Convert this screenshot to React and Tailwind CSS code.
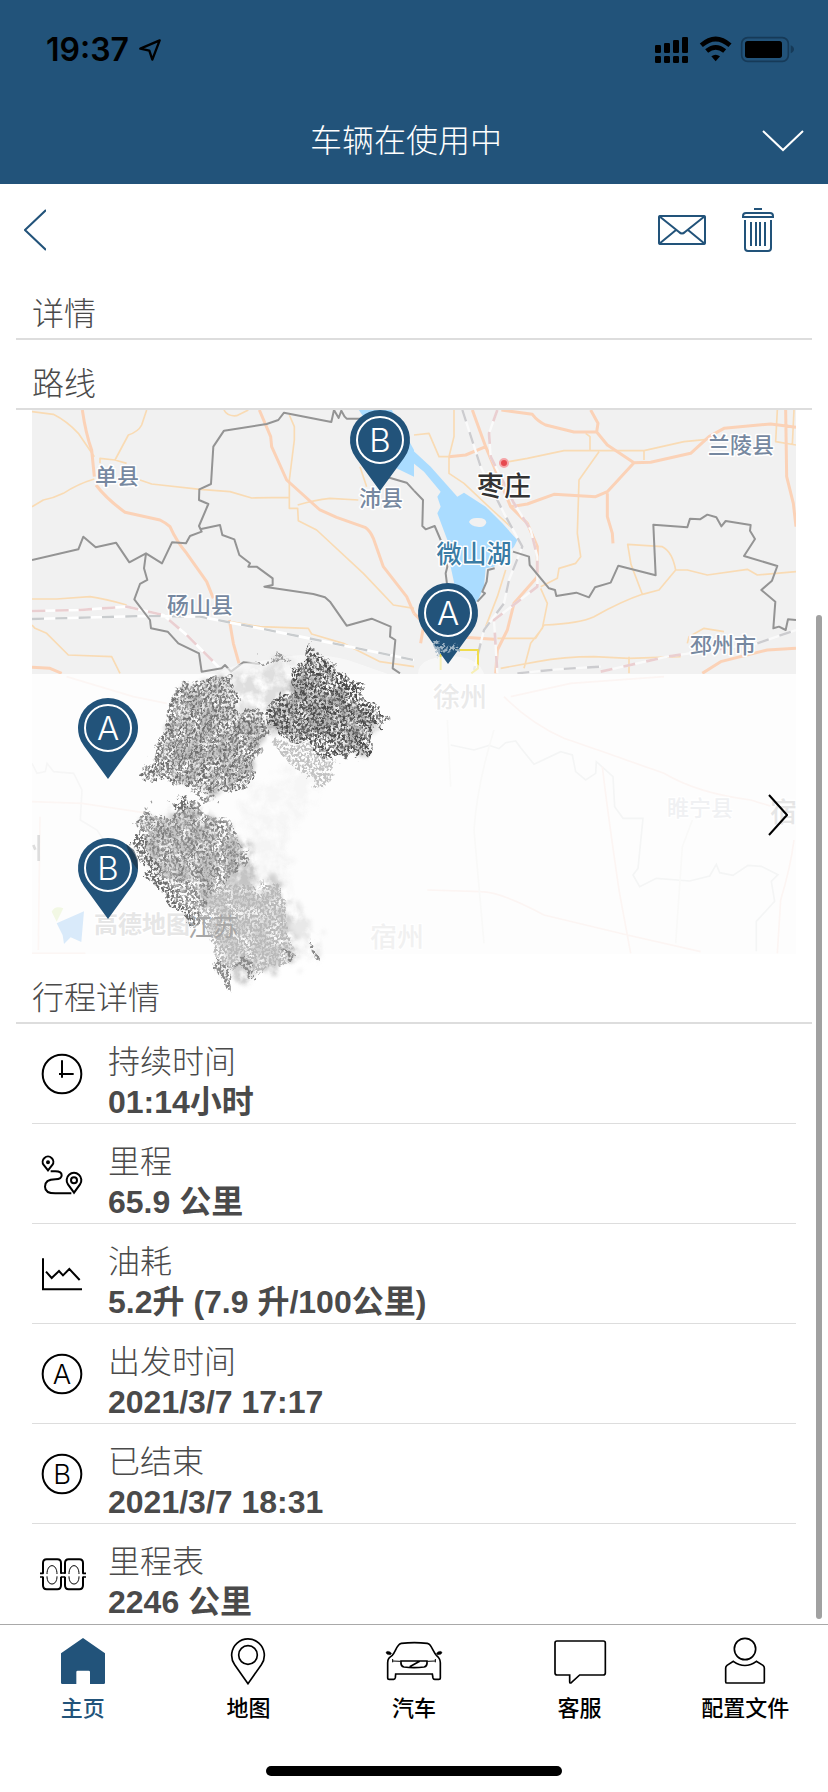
import React, { useState } from "react";

const TRIP_ROWS = [
  { icon: "clock", label: "持续时间", value: "01:14小时" },
  { icon: "route", label: "里程", value: "65.9 公里" },
  { icon: "fuel", label: "油耗", value: "5.2升 (7.9 升/100公里)" },
  { icon: "start", label: "出发时间", value: "2021/3/7 17:17" },
  { icon: "end", label: "已结束", value: "2021/3/7 18:31" },
  { icon: "odometer", label: "里程表", value: "2246 公里" },
];

const TABS = [
  { id: "home", label: "主页" },
  { id: "map", label: "地图" },
  { id: "car", label: "汽车" },
  { id: "support", label: "客服" },
  { id: "profile", label: "配置文件" },
];

const ROW_ICONS = {
  clock: (
    <svg viewBox="114 89 144 144" className="size-12" fill="none" stroke="#000" strokeWidth="6">
      <circle cx="186" cy="161" r="58" />
      <path d="M186 120v52M177 161h44" />
    </svg>
  ),
  route: (
    <svg viewBox="114 389 144 144" className="size-12" fill="none" stroke="#000" strokeWidth="6">
      <path d="M144 450l-13-16a16 16 0 1 1 26 0z" />
      <circle cx="144" cy="426" r="3" fill="#000" />
      <path d="M222 517l-18-25a22 22 0 1 1 36 0z" />
      <circle cx="222" cy="480" r="9" />
      <path d="M152 453h14c12 0 19 5 19 12 0 8-7 12-19 12-20 0-31 8-31 22s11 20 31 20h48" />
    </svg>
  ),
  fuel: (
    <svg viewBox="114 689 144 144" className="size-12" fill="none" stroke="#000" strokeWidth="6">
      <path d="M129 714v93h117" />
      <path d="M138 754l17 19 22-21 12 13 19-19 31 33" />
    </svg>
  ),
  start: <LetterIcon letter="A" />,
  end: <LetterIcon letter="B" />,
  odometer: (
    <svg viewBox="114 689 144 144" className="size-12" fill="none" stroke="#000" strokeWidth="6">
      <path d="M129 760v-32q0-11 11-11h32q11 0 11 11v32M129 769v26q0 12 11 12h32q11 0 11-12v-26" />
      <path d="M195 760v-32q0-11 11-11h32q11 0 11 11v32M195 769v26q0 12 11 12h32q11 0 11-12v-26" />
      <path d="M120 759h10M120 770h10M248 759h10M248 770h10M183 758h12M183 770h12" strokeWidth="5" />
      <path d="M141 761c0-14 6-25 15-25s15 11 15 25M141 768c0 14 6 23 15 23s15-9 15-23" strokeWidth="3" />
      <path d="M207 761c0-14 6-25 15-25s15 11 15 25M207 768c0 14 6 23 15 23s15-9 15-23" strokeWidth="3" />
    </svg>
  ),
};

const TAB_ICONS = {
  home: (
    <svg viewBox="159 81 180 144" className="h-12 w-15" fill="#22537a">
      <path d="M249 84l66 46v88q0 4-4 4h-41v-36q0-4-4-4h-33q-4 0-4 4v36h-42q-4 0-4-4v-88z" />
    </svg>
  ),
  map: (
    <svg viewBox="660 81 180 144" className="h-12 w-15" fill="none" stroke="#000" strokeWidth="5">
      <path d="M750 221l-40-57a49 49 0 1 1 80 0z" />
      <circle cx="750" cy="135" r="28" />
    </svg>
  ),
  car: (
    <svg viewBox="40 21 180 144" className="h-12 w-15" fill="none" stroke="#000" strokeWidth="5">
      <path d="M51 98v45q0 5 5 5h13q4 0 5-5l1-11h110l2 12q1 4 5 4h12q5 0 5-5V98c0-12-4-16-12-22-8-10-12-22-19-31q-3-4-8-5c-26-3-52-3-78 0q-5 1-8 5c-8 9-11 21-19 31-9 6-14 10-14 22z" />
      <path d="M63 70c-6-7-14-8-17-3 1 7 8 8 14 7zM197 70c6-7 14-8 17-3-1 7-8 8-14 7z" fill="#000" strokeWidth="1" />
      <path d="M66 87v10M66 93l24 1M194 87v10M194 93l-24 1" strokeWidth="3" />
      <path d="M91 93h78c1 10-2 17-9 18-18 2-42 2-60 0-7-1-10-8-9-18zM117 110l30-16" strokeWidth="5" />
    </svg>
  ),
  support: (
    <svg viewBox="423 81 180 144" className="h-12 w-15" fill="none" stroke="#000" strokeWidth="5">
      <path d="M444 93h139q6 0 6 6v90q0 6-6 6h-71l-25 23q-5 3-5-3v-20h-38q-6 0-6-6V99q0-6 6-6z" />
    </svg>
  ),
  profile: (
    <svg viewBox="921 81 180 144" className="h-12 w-15" fill="none" stroke="#000" strokeWidth="5">
      <circle cx="1011" cy="117" r="32" />
      <path d="M976 154q35 25 69 0l20 12q4 3 4 8v41q0 4-4 4H957q-4 0-4-4v-41q0-5 4-8z" />
    </svg>
  ),
};

function LetterIcon({ letter }) {
  return (
    <svg viewBox="0 0 144 144" className="size-12">
      <circle cx="72" cy="72" r="58" fill="none" stroke="#000" strokeWidth="6" />
      <text x="72" y="102" textAnchor="middle" fontSize="82" fontWeight="300" fontFamily="Inter, sans-serif">
        {letter}
      </text>
    </svg>
  );
}

function StatusBar() {
  return (
    <div className="flex h-[98px] items-center justify-between pt-[2px] pr-[33px] pl-[46px] text-black">
      <div className="flex items-center gap-[10px]">
        <span className="font-[Inter,sans-serif] text-[32px] leading-10 font-semibold">19:37</span>
        <svg viewBox="0 0 66 66" className="size-[22px]" fill="none" stroke="#000" strokeWidth="7" strokeLinejoin="round">
          <path d="M62 4L4 29l27 6 9 27z" />
        </svg>
      </div>
      <svg viewBox="45 48 420 84" className="h-7 w-[140px]">
        <rect x="45" y="75" width="18" height="24" rx="4" />
        <rect x="72" y="69" width="18" height="30" rx="4" />
        <rect x="99" y="60" width="18" height="39" rx="4" />
        <rect x="126" y="51" width="18" height="48" rx="4" />
        <rect x="45" y="108" width="18" height="21" rx="4" />
        <rect x="72" y="108" width="18" height="21" rx="4" />
        <rect x="99" y="108" width="18" height="21" rx="4" />
        <rect x="126" y="108" width="18" height="21" rx="4" />
        <path d="M184 76q43-38 86 0M200 93q27-22 54 0" fill="none" stroke="#000" strokeWidth="14" />
        <path d="M214 109q13-9 26 0l-13 15z" />
        <rect x="305" y="53" width="140" height="71" rx="18" fill="none" stroke="#163a58" strokeWidth="5" />
        <rect x="315" y="63" width="111" height="51" rx="8" />
        <path d="M452 76q10 4 10 12t-10 12z" fill="#163a58" />
      </svg>
    </div>
  );
}

function Pin({ x, y, letter }) {
  return (
    <g transform={`translate(${x} ${y})`}>
      <path d="M0 51L-24 18a30 30 0 1 1 48 0z" fill="#22537a" />
      <circle r="23" fill="none" stroke="#fff" strokeWidth="2" />
      <text y="12" textAnchor="middle" fontSize="33" fontWeight="300" fontFamily="Inter, sans-serif" fill="#fff">
        {letter}
      </text>
    </g>
  );
}

function PlaceName({ x, y, size = 22, color = "#7688a0", weight = 500, halo = "#fff", children }) {
  return (
    <text
      x={x}
      y={y}
      fontSize={size}
      fontWeight={weight}
      textAnchor="middle"
      fill={color}
      stroke={halo}
      strokeWidth="3"
      paintOrder="stroke"
      strokeLinejoin="round"
    >
      {children}
    </text>
  );
}

function RouteMap() {
  return (
    <svg
      viewBox="0 0 764 544"
      preserveAspectRatio="xMidYMid slice"
      className="block h-[544px] w-full overflow-visible"
      fontFamily="'Noto Sans CJK SC', sans-serif"
    >
      <defs>
        <clipPath id="mapTop">
          <rect width="764" height="264" />
        </clipPath>
        <clipPath id="mapAll">
          <rect width="764" height="544" />
        </clipPath>
        {/* stripe directions of the pencil strokes */}
        <pattern id="steep" width="37" height="60" patternUnits="userSpaceOnUse" patternTransform="rotate(22)">
          <rect width="37" height="60" fill="#8f8f8f" />
          <rect x="3" width="9" height="60" fill="#6c6c6c" />
          <rect x="20" width="6" height="60" fill="#777777" />
          <rect x="29" width="5" height="60" fill="#b5b5b5" />
        </pattern>
        <pattern id="dark" width="41" height="60" patternUnits="userSpaceOnUse" patternTransform="rotate(-43)">
          <rect width="41" height="60" fill="#6a6a6a" />
          <rect x="4" width="12" height="60" fill="#4a4a4a" />
          <rect x="22" width="5" height="60" fill="#a8a8a8" />
          <rect x="31" width="6" height="60" fill="#525252" />
        </pattern>
        <pattern id="mid" width="43" height="60" patternUnits="userSpaceOnUse" patternTransform="rotate(-40)">
          <rect width="43" height="60" fill="#9c9c9c" />
          <rect x="4" width="9" height="60" fill="#7e7e7e" />
          <rect x="20" width="7" height="60" fill="#bdbdbd" />
          <rect x="33" width="5" height="60" fill="#868686" />
        </pattern>
        <filter id="pencil" x="-10%" y="-10%" width="120%" height="120%" colorInterpolationFilters="sRGB">
          <feTurbulence type="fractalNoise" baseFrequency="0.02" numOctaves="4" seed="4" result="edge" />
          <feTurbulence type="fractalNoise" baseFrequency="0.14 0.12" numOctaves="3" seed="7" result="fine" />
          <feColorMatrix in="fine" values="0 0 0 0 0  0 0 0 0 0  0 0 0 0 0  0 0 0 6 -2.4" result="grain" />
          <feDisplacementMap in="SourceGraphic" in2="edge" scale="70" xChannelSelector="R" yChannelSelector="G" result="d" />
          <feComposite in="d" in2="grain" operator="in" />
        </filter>
        <filter id="smear" x="-10%" y="-10%" width="120%" height="120%" colorInterpolationFilters="sRGB">
          <feTurbulence type="fractalNoise" baseFrequency="0.025" numOctaves="5" seed="9" result="n" />
          <feColorMatrix in="n" values="0 0 0 0 0  0 0 0 0 0  0 0 0 0 0  0 0 0 3 -0.8" result="grain" />
          <feDisplacementMap in="SourceGraphic" in2="n" scale="90" xChannelSelector="R" yChannelSelector="G" result="d" />
          <feGaussianBlur in="d" stdDeviation="7" result="b" />
          <feComposite in="b" in2="grain" operator="in" />
        </filter>
      </defs>

      <g clipPath="url(#mapTop)">
        <rect width="764" height="264" fill="#f1f1f1" />

        {/* west half */}
        <g transform="translate(-32 -130) scale(0.33333)" fill="none" strokeLinejoin="round">
          <path d="M1070 380h100l72 130v80l-62-30-30-60z" fill="#aadcff" />
          <path
            stroke="#f9dbb4"
            strokeWidth="5"
            d="M96 395l64 8q40 20 75 57l48 70M440 390l-15 45q-10 20-40 30l-40 75M300 550v-15l45 5 35 10M283 597q-50 15-93 43-30 15-60 20l-34 20M420 600l35 12 145 16 90 7 65 19 113-2M868 405l15 35v40l-15 120v85h25l2 37 55 28 140 130 90 95 62 10M893 675q50-15 97-20l85 5M672 390q10 20 38 17l35-17M96 957h74l100-7q40 5 110 25M690 1025l90 15 145 5 10 17 95 28 110 55 102 15M96 1035l9 10 35 15q30 30 65 65l130 5 25 50M1080 560l20 60"
          />
          <path
            stroke="#fbd2b7"
            strokeWidth="9"
            d="M247 390q10 70 28 120l8 80M288 615q30 40 87 82l105 23q20 10 30 20 20 45 50 80l60 85 20 50M688 1020l12 70 17 60M778 390l34 80 3 30 45 100 100 90 50 22 85 30q15 10 25 33l30 85 70 90 22 50M96 1162l54 3 35 15"
          />
          <path stroke="#fff" strokeWidth="8" d="M96 993l144-3 140-10 110 25 70 60 100 100M96 1017l334-9 170 2 180 35 220 45 242 50" />
          <path stroke="#eacfd1" strokeWidth="8" strokeDasharray="40 30" d="M96 993l144-3 140-10 110 25 70 60 100 100" />
          <path stroke="#c9ccce" strokeWidth="7" strokeDasharray="36 34" d="M96 1017l334-9 170 2 180 35 220 45 242 50" />
          <path
            stroke="#949494"
            strokeWidth="6"
            d="M96 840l139-32 15-38 37 32 61-14 40 59 50-27 48 30 30-63 42 3 12-22 35-13-8-17 28-66-28-12 1-32 35-16 7-112 32-48 128-20 35-12 17-22 142 28 8-36 14 24 8-22 10 18 6 6h40M600 748l60-13 7 30 36 13 15 47 32 25-5 10h25l48 35v20l-25 5 147 22 35 10 15 13 50 72 75-21 57 24-2 30 16 10-8 85 22 15M438 820l-6 45 10 35-22 12-17 46 47 62 3 25 50 10 32 35 62 30 8 55 60-10 10-10 18 20 37-28 50 5M1140 585l80 23 22 24"
          />
        </g>

        {/* east half */}
        <g transform="translate(382 -130) scale(0.33333)" fill="none" strokeLinejoin="round">
          <path
            d="M-10 505l60 55 80 90 20-12 65 42 50 50 45 50-10 20-60 60-25 5-5 55-20 45h-40l-25-35-15-70-10-80-30-80 10-20-10-30 10-15-50-60-50-40z"
            fill="#aadcff"
          />
          <path d="M165 726q5-14 28-12 24 0 24 14-6 16-26 12-20-2-26-14z" fill="#f1f1f1" />
          <path
            stroke="#f9dbb4"
            strokeWidth="5"
            d="M120 390v80l-15 60v50l45 30 85 80 55 50M0 465l45-5 30 70h30M285 545l55-10 110-23h240l120-27 70-7M515 460l13 10v42M555 515l-60 85-5 160 10 70-15 20-50 15-5 30-50 25M690 510v30M641 793l104 7q30 15 40 70l-50 60-50 13-34-90zM685 943q-60 20-145 67-40 20-150 25M785 870h35l60 15 120-17 30 17 116-10M380 925l20 45-15 75-35 45-20 75M260 1165l110-20q80-15 170-15l105 5 155-5M645 1130v50M1090 390l-5 95 61 10M1140 390l-5 105M275 870l-25 80-35 90M820 1090l5-20 45-25 60 10M250 1075h115l25-40"
          />
          <path
            stroke="#fbd2b7"
            strokeWidth="9"
            d="M175 390l40 110 25 60 50 120 50 50 30 70v90l-70 80-20 80-30 60-5 70M105 530l50-5 60-25M262 390l93 13q15 20 40 32l85 21h68l4-26-22-40M548 456l32 39 80 53 50-1 120-27 55-50 45-25 140-13 76 10M660 548l-80 87-35 15-125-7-80 29-50 8M580 640v70l15 50 2 30M1115 390l3 200 20 80 8 70M865 1180l55-35 140-35 86-5M150 1072l90 6M0 1000l30 30-10 60"
          />
          <path stroke="#fafafa" strokeWidth="7" d="M145 390l55 170 70 140 55 100-40 100-15 70-60 80-30 120M250 390l-25 70 5 70 70 140 50 80 20 80v90l-130 100 10 160M310 1180l120-12 130-8M560 1175l200-45 270-40 116-40" />
          <path stroke="#cccccf" strokeWidth="7" strokeDasharray="36 34" d="M145 390l55 170 70 140 55 100-40 100-15 70-60 80-30 120M310 1180l120-12 130-8M1030 1090l116-40" />
          <path stroke="#eacfd1" strokeWidth="8" strokeDasharray="36 34" d="M250 390l-25 70 5 70 70 140 50 80 20 80v90l-130 100 10 160M560 1175l200-45 270-40" />
          <path stroke="#f0dc4e" strokeWidth="6" d="M80 1110h112v55l-20 15M80 1120v50" />
          <path
            stroke="#949494"
            strokeWidth="6"
            d="M0 632l27 28-2 78 10 10 27-10 18 42 20 80-5 20 5 40M297 815l48 15 2 25 58 70 18 5 4 18 60-10 38 14 18-30 47-14 23-51 112 29-7-152 102 8 8-26 30 2 22-14 27 8 15 27 13-16 75 12-2 17 15 25-33 51 100 30-16 44-32 28 42 35-6 80 17-5 20 10 7-32 24 2M242 865l-20 5-4 35-13 30 8 5-23 25"
          />
        </g>
        <circle cx="472" cy="53" r="4" fill="#e6494f" stroke="#f5a5a8" strokeWidth="2" />

        <PlaceName x="85" y="74">单县</PlaceName>
        <PlaceName x="168" y="203">砀山县</PlaceName>
        <PlaceName x="349" y="96">沛县</PlaceName>
        <PlaceName x="709" y="43">兰陵县</PlaceName>
        <PlaceName x="691" y="243">邳州市</PlaceName>
        <PlaceName x="442" y="153" size={25} color="#3a7ca5">微山湖</PlaceName>
        <PlaceName x="472" y="86" size={27} color="#333333">枣庄</PlaceName>
        <path d="M186 264q10-10 50-14 40-10 80 0l40 14zM386 264q0-16 30-18 30 0 36 18z" fill="#fbfbfb" opacity="0.6" />
      </g>

      <Pin x={348} y={30} letter="B" />
      <Pin x={416} y={203} letter="A" />
      <g transform="translate(382 -130) scale(0.33333)">
        <path d="M60 1090l20-5 22 15 26-10 5 20-25 20-30-5z" fill="#9db3c4" filter="url(#pencil)" />
      </g>

      {/* faded lower part of the map under the addresses */}
      <g clipPath="url(#mapAll)">
        <rect y="264" width="764" height="280" fill="#fdfdfd" />
        <g transform="translate(382 230) scale(0.33333)" fill="none" strokeWidth="5">
          <path stroke="#f4f5f5" d="M110 315l70 15 45-14 30 10 20-18 30-5 15 20 40 50 80-38 35 10 10 50 30 25 30-20 2-35 50 45 5 90 25 35h60l-15 150-15 20 20 35 50-25 100 8 60-15 20-35 10 25 40 8 45-30 40 3 50 25-20 20 10 60-55 60v90" />
          <path stroke="#fcf5f3" d="M270 170q80 80 180 125l130 45 170 60q100 60 260 80l130 40M290 170l180-40 280-20M565 380q15 130 50 370l35 190M1140 600q-10 80-40 180l-10 160M40 750l160 5q60 0 190 70l250 60 220 50" />
          <path stroke="#f9f9f8" d="M100 240l10 200M240 270q-50 160-60 300l30 340M835 540l-30 80-20 290" />
        </g>
        <g transform="translate(-32 230) scale(0.33333)" fill="none" strokeWidth="5">
          <path stroke="#f6f6f6" d="M96 370l15 30 25-5 5-25 20 25 60 5 25 50-5 90 50 30 20 30" />
          <path stroke="#fcf6f4" d="M96 485l150 5 200 30M120 530l-5 400M200 110l200 60 100 20M96 940h160" />
          <path d="M170 850l82-36-8 92-32-14-20 20-4-26z" fill="#d9eafa" />
          <path d="M155 815q10-20 35-10l-20 40z" fill="#f2f8e4" />
          <path d="M116 585v78M100 615l6 14" stroke="#dddddd" strokeWidth="8" />
        </g>
        <PlaceName x="428" y="297" size={27} color="#eaeaea">徐州</PlaceName>
        <PlaceName x="668" y="406" size={22} color="#f0f1f3">睢宁县</PlaceName>
        <PlaceName x="765" y="412" size={27} color="#e6e6e6">宿迁</PlaceName>
        <PlaceName x="365" y="537" size={27} color="#f1f1f1">宿州</PlaceName>
        <PlaceName x="110" y="523" size={24} color="#e6e6e6" weight={700}>高德地图</PlaceName>
      </g>

      <Pin x={76} y={318} letter="A" />

      {/* pencil shading */}
      <g transform="translate(-32 230) scale(0.33333)">
        <g filter="url(#smear)">
          <path d="M700 110l170-50 20 110-80 60-110-30z" fill="#dedede" />
          <path d="M720 440l200-60 50 60-80 120-160 20z" fill="#f6f6f6" />
          <path d="M760 560l90-20 20 230-120-50z" fill="#f4f4f4" />
          <path d="M550 150l130-40 10 90 100 50-30 150-110 60-110-40-70-20z" fill="#c4c4c4" />
          <path d="M890 110l50-50 190 190-50 90-280-80z" fill="#b5b5b5" />
          <path d="M440 540l140-40 160 110 60 130-150 80-200-160z" fill="#c4c4c4" />
          <path d="M620 740l210-30 60 150-10 110-190 60-60-170z" fill="#d0d0d0" />
          <path d="M890 790l50 50 30 110-40 10-50-80z" fill="#e8e8e8" />
        </g>
        <g filter="url(#pencil)">
          <path d="M540 130l155-20 10 90 95 35-30 155-30 60-90 20-90-40-50-10-85 5z" fill="url(#steep)" />
          <path d="M770 75l75-30 20 20-50 10z" fill="#9c9c9c" />
          <path d="M920 25l20-15 230 230-40 20-10 60-35 50-60-40-40 30-185-100 10-80 60-20 5-70 50-10z" fill="url(#dark)" />
          <path d="M820 290l200 75-55 85-150-130z" fill="#c2c2c2" />
          <path d="M570 430l75 55-15 10-60-45zM400 550l50-45 55 20 70-45 125 80 45 80-90 130-60 90-25 5-165-220z" fill="url(#mid)" />
          <path d="M505 490l60-25 15 45-50 20z" fill="#6e6e6e" />
          <path d="M390 600l35 0 50 80 110 175-20 5-130-160z" fill="#6e6e6e" />
          <path d="M630 750l200-10 50 120-10 100-130 40-100-50-40-140z" fill="#b9b9b9" />
          <path d="M645 960l45 5 5 90h-25zM700 965l55 0 20 45-30 10-20-30zM840 930l45 10-10 30zM920 900l45 60-35-5z" fill="#8a8a8a" />
        </g>
      </g>
      <PlaceName x="181" y="526" size={25} color="#a6a6a6" weight={400} halo="none">江苏</PlaceName>
      <Pin x={76} y={458} letter="B" />
      <path d="M94 434l8 6 4 10v10l-6-8z" fill="#1b2f40" opacity="0.6" />
    </svg>
  );
}

function SectionTitle({ children }) {
  return (
    <h2 className="mx-4 flex h-[70px] items-end border-b-2 border-[#dddddd] px-4 pb-1 text-[32px] leading-10 font-light">
      {children}
    </h2>
  );
}

export default function App() {
  const [activeTab, setActiveTab] = useState("home");

  return (
    <div className="relative w-full bg-white font-['Liberation_Sans','Noto_Sans_CJK_SC',sans-serif] text-[#4a4a4a]">
      <header className="bg-[#22537a] text-white">
        <StatusBar />
        <div className="grid h-[86px] grid-cols-[1fr_auto_1fr] items-center pr-6 pl-2">
          <span />
          <h1 className="text-[32px] leading-10 font-light">车辆在使用中</h1>
          <button className="justify-self-end" aria-label="展开">
            <svg viewBox="0 0 42 22" className="h-[22px] w-[42px]" fill="none" stroke="#fff" strokeWidth="2">
              <path d="M1 1l20 19L41 1" />
            </svg>
          </button>
        </div>
      </header>

      <div className="flex h-[86px] items-center justify-between pt-[6px] pr-[54px] pl-6">
        <button aria-label="返回">
          <svg viewBox="0 0 22 42" className="h-[42px] w-[22px]" fill="none" stroke="#22537a" strokeWidth="2">
            <path d="M22 1L1 21l21 20" />
          </svg>
        </button>
        <div className="flex items-center gap-9">
          <button aria-label="邮件">
            <svg viewBox="0 0 48 30" className="h-[30px] w-12" fill="none" stroke="#22537a" strokeWidth="2">
              <rect x="1" y="1" width="46" height="28" rx="1" />
              <path d="M1 1l20 16q3 3 6 0L47 1M1 29l17-14M47 29L30 15" />
            </svg>
          </button>
          <button aria-label="删除">
            <svg viewBox="0 0 32 44" className="h-11 w-8" fill="none" stroke="#22537a" strokeWidth="2">
              <path d="M12 1h8M1 9V8q0-3 3-3h24q3 0 3 3v1zM3 12v28q0 3 3 3h20q3 0 3-3V12M9 14v24M14 14v24M18 14v24M23 14v24" />
            </svg>
          </button>
        </div>
      </div>

      <main>
        <SectionTitle>详情</SectionTitle>
        <SectionTitle>路线</SectionTitle>
        <div className="relative mx-8">
          <RouteMap />
          <button className="absolute right-2 bottom-[118px]" aria-label="查看路线">
            <svg viewBox="0 0 20 42" className="h-[42px] w-5" fill="none" stroke="#000" strokeWidth="2">
              <path d="M1 1l18 20L1 41" />
            </svg>
          </button>
        </div>
        <SectionTitle>行程详情</SectionTitle>
        <dl className="mx-8">
          {TRIP_ROWS.map((row) => (
            <div
              key={row.label}
              className="flex h-[100px] items-start gap-[22px] border-b border-[#dddddd] pl-[6px] last:border-b-0"
            >
              <div className="pt-[26px]">{ROW_ICONS[row.icon]}</div>
              <div className="pt-[18px] text-[32px] leading-10">
                <dt className="font-light">{row.label}</dt>
                <dd className="font-semibold">{row.value}</dd>
              </div>
            </div>
          ))}
        </dl>
      </main>

      <div className="absolute top-[615px] right-[6px] bottom-[173px] w-[6px] rounded-full bg-[#a1a1a1]" />

      <nav className="border-t border-[#a9a9a9] pt-3">
        <div className="grid grid-cols-5">
          {TABS.map((tab) => (
            <button
              key={tab.id}
              onClick={() => setActiveTab(tab.id)}
              className={`flex flex-col items-center gap-2 text-[22px] leading-8 font-medium ${
                activeTab === tab.id ? "text-[#22537a]" : "text-black"
              }`}
            >
              {TAB_ICONS[tab.id]}
              {tab.label}
            </button>
          ))}
        </div>
        <div className="pt-[41px] pb-4">
          <div className="mx-auto h-[10px] w-[296px] rounded-full bg-black" />
        </div>
      </nav>
    </div>
  );
}
